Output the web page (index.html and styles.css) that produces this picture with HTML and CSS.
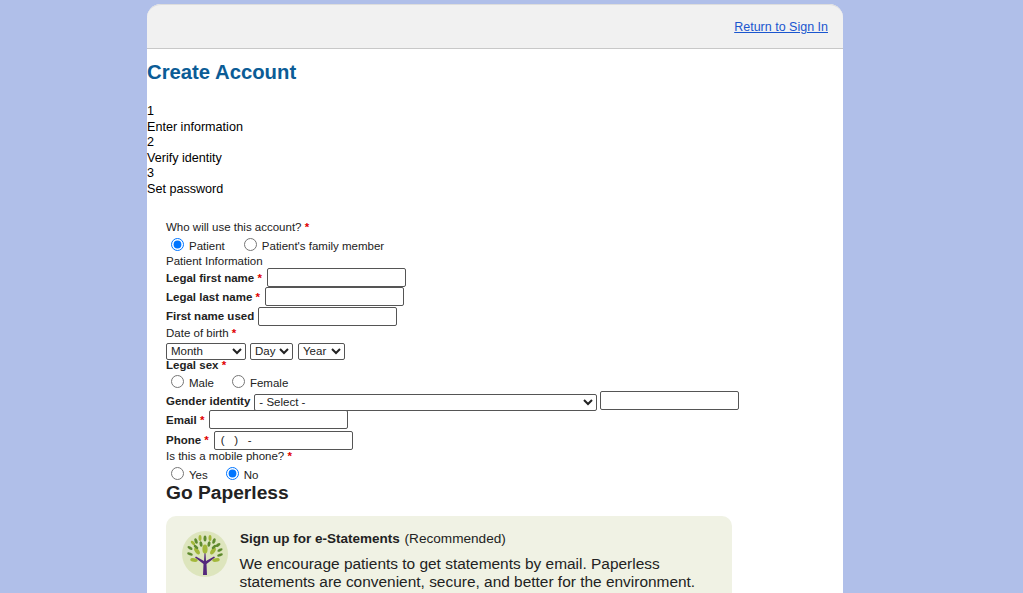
FILE: index.html
```html
<!DOCTYPE html>
<html>
<head>
<link rel="stylesheet" href="styles.css">
</head>
<body>

<div class="page">
  <div class="top-bar">
    <a class="return-link" href="#">Return to Sign In</a>
  </div>

  <h1 class="page-title">Create Account</h1>

  <div class="steps">
    <div>1</div>
    <div>Enter information</div>
    <div>2</div>
    <div>Verify identity</div>
    <div>3</div>
    <div>Set password</div>
  </div>

  <form class="account-form">
    <div class="plain-label">Who will use this account? <span class="req">*</span></div>
    <div class="radio-row who-row">
      <label class="radio-item patient-item"><input type="radio" name="who" checked> Patient</label>
      <label class="radio-item"><input type="radio" name="who"> Patient's family member</label>
    </div>
    <div class="plain-label">Patient Information</div>

    <div class="field-row"><label class="bold-label">Legal first name <span class="req">*</span></label><input class="text-input" type="text"></div>
    <div class="field-row"><label class="bold-label">Legal last name <span class="req">*</span></label><input class="text-input" type="text"></div>
    <div class="field-row"><label class="bold-label">First name used</label><input class="text-input" type="text"></div>

    <div class="plain-label">Date of birth <span class="req">*</span></div>
    <div class="dob-row">
      <select class="month-select"><option>Month</option></select>
      <select class="day-select"><option>Day</option></select>
      <select class="year-select"><option>Year</option></select>
    </div>

    <div class="bold-label sex-label">Legal sex <span class="req">*</span></div>
    <div class="radio-row sex-row">
      <label class="radio-item male-item"><input type="radio" name="sex"> Male</label>
      <label class="radio-item"><input type="radio" name="sex"> Female</label>
    </div>

    <div class="field-row">
      <label class="bold-label">Gender identity</label>
      <select class="gender-select"><option>- Select -</option></select>
      <input class="text-input" type="text">
    </div>
    <div class="field-row"><label class="bold-label">Email <span class="req">*</span></label><input class="text-input" type="text"></div>
    <div class="field-row phone-row"><label class="bold-label">Phone <span class="req">*</span></label><input class="text-input" type="text" value="(   )   -"></div>

    <div class="plain-label">Is this a mobile phone? <span class="req">*</span></div>
    <div class="radio-row mobile-row">
      <label class="radio-item yes-item"><input type="radio" name="mobile"> Yes</label>
      <label class="radio-item"><input type="radio" name="mobile" checked> No</label>
    </div>

    <h2 class="section-title">Go Paperless</h2>

    <div class="paperless-card">
      <svg class="tree-icon" viewBox="0 0 46 46" width="46" height="46">
        <circle cx="23" cy="23" r="23" fill="#dde5bd"/>
        <path d="M21 44 L21.5 33 L13 26.5 L14 25.5 L22 30 L22.5 22 L23.5 22 L24 30 L32 25.5 L33 26.5 L24.5 33 L25 44 Z" fill="#54287c"/>
        <g fill="#a3b83a">
          <ellipse cx="23" cy="18" rx="2.6" ry="4.5"/>
          <ellipse cx="15" cy="20" rx="2" ry="4" transform="rotate(-35 15 20)"/>
          <ellipse cx="31" cy="20" rx="2" ry="4" transform="rotate(35 31 20)"/>
          <ellipse cx="12" cy="29" rx="3.8" ry="1.8" transform="rotate(8 12 29)"/>
          <ellipse cx="34" cy="29" rx="3.8" ry="1.8" transform="rotate(-8 34 29)"/>
          <ellipse cx="18" cy="7" rx="1.5" ry="3"/>
          <ellipse cx="28" cy="7" rx="1.5" ry="3"/>
          <ellipse cx="11" cy="12" rx="1.5" ry="2.8" transform="rotate(-45 11 12)"/>
        </g>
        <g fill="#5f8a2e">
          <ellipse cx="23" cy="7.5" rx="1.5" ry="3"/>
          <ellipse cx="14" cy="10" rx="1.5" ry="2.8" transform="rotate(-20 14 10)"/>
          <ellipse cx="32" cy="10" rx="1.5" ry="2.8" transform="rotate(20 32 10)"/>
          <ellipse cx="36" cy="14" rx="2.8" ry="1.4" transform="rotate(-35 36 14)"/>
          <ellipse cx="8" cy="17" rx="2.8" ry="1.4" transform="rotate(30 8 17)"/>
          <ellipse cx="38" cy="19" rx="2.8" ry="1.4" transform="rotate(-25 38 19)"/>
          <ellipse cx="8" cy="23" rx="3" ry="1.4" transform="rotate(20 8 23)"/>
          <ellipse cx="38" cy="24" rx="3" ry="1.4" transform="rotate(-20 38 24)"/>
          <ellipse cx="19" cy="13" rx="1.5" ry="2.8" transform="rotate(-10 19 13)"/>
          <ellipse cx="27" cy="13" rx="1.5" ry="2.8" transform="rotate(10 27 13)"/>
          <ellipse cx="14" cy="16" rx="2.8" ry="1.4" transform="rotate(40 14 16)"/>
          <ellipse cx="32" cy="16" rx="2.8" ry="1.4" transform="rotate(-40 32 16)"/>
        </g>
      </svg>
      <div class="card-text">
        <div class="card-heading"><b>Sign up for e-Statements</b> (Recommended)</div>
        <div class="card-body">We encourage patients to get statements by email. Paperless statements are convenient, secure, and better for the environment.</div>
      </div>
    </div>
  </form>
</div>

</body>
</html>
```

FILE: styles.css
```css
html {
  overflow: hidden;
}

body {
  margin: 0;
  background-color: #b0bfe9;
  font-family: "Liberation Sans", Arial, sans-serif;
  color: #000;
}

.page {
  width: 696px;
  margin: 4px 0 0 147px;
  padding-bottom: 60px;
  background-color: #fff;
  border-radius: 14px 14px 0 0;
}

.top-bar {
  display: flex;
  justify-content: flex-end;
  height: 43px;
  padding-right: 15px;
  background-color: #f1f1f1;
  border-top: 1px solid #ddd;
  border-bottom: 1px solid #c8c8c8;
  border-radius: 14px 14px 0 0;
}

.return-link {
  height: 16px;
  margin-top: 14px;
  font-size: 12.5px;
  line-height: 16px;
  color: #1a56cf;
}

.page-title {
  margin: 11px 0 0;
  font-size: 20.3px;
  line-height: 24px;
  font-weight: bold;
  color: #0b5c96;
}

.steps {
  margin-top: 20px;
  font-size: 12.6px;
  line-height: 15.5px;
}

.account-form {
  margin-top: 23px;
  padding-left: 19px;
  font-size: 11.5px;
  color: #222;
}

.plain-label {
  line-height: 14px;
}

.req {
  margin-right: 1px;
  color: #e00000;
  font-weight: bold;
}

.radio-row {
  display: flex;
  height: 18px;
  padding-left: 5px;
  align-items: center;
}

.who-row {
  margin-top: 3px;
  margin-bottom: -1px;
}

.sex-row {
  margin-top: 2px;
  margin-bottom: -1px;
}

.mobile-row {
  margin-top: 3px;
  margin-bottom: -3px;
}

.radio-item {
  display: flex;
  align-items: center;
  gap: 5px;
}

.radio-item input {
  width: 13px;
  height: 13px;
  margin: 0 0 3px;
}

.patient-item {
  margin-right: 19px;
}

.male-item {
  margin-right: 18px;
}

.yes-item {
  margin-right: 18px;
}

.field-row {
  display: flex;
  align-items: center;
  gap: 4px;
  height: 19.3px;
}

.phone-row {
  margin-top: 1px;
  margin-bottom: -1px;
}

.bold-label {
  font-weight: bold;
}

.text-input {
  box-sizing: border-box;
  width: 139px;
  height: 19px;
  margin: 0;
  padding: 1px 6px;
  border: 1px solid #555;
  border-radius: 2px;
  background: #fff;
  font-family: inherit;
  font-size: 11.5px;
  color: #222;
}

.dob-row {
  display: flex;
  gap: 4px;
  margin-top: 3px;
}

.dob-row select,
.gender-select {
  box-sizing: border-box;
  height: 17px;
  padding: 0;
  border: 1px solid #555;
  border-radius: 2px;
  background-color: #fff;
  font-family: inherit;
  font-size: 11.5px;
  color: #222;
}

.dob-row select {
  margin: 0;
}

.month-select {
  width: 80px;
}

.day-select {
  width: 43px;
}

.dob-row .year-select {
  width: 47px;
  margin-left: 1px;
}

.sex-label {
  margin-top: -2px;
  line-height: 14px;
}

.gender-select {
  width: 343px;
  margin: 3px -1px 0 0;
}

.section-title {
  margin: 0;
  font-size: 19.2px;
  line-height: 24px;
  font-weight: bold;
  color: #222;
}

.paperless-card {
  display: flex;
  gap: 12px;
  width: 566px;
  margin-top: 11px;
  padding: 15px 16px 30px;
  box-sizing: border-box;
  background-color: #f0f2e4;
  border-radius: 10px;
}

.tree-icon {
  flex-shrink: 0;
}

.card-heading {
  font-size: 13.6px;
  line-height: 16px;
}

.card-heading b {
  margin-right: 1px;
  font-size: 13.5px;
}

.card-body {
  margin-top: 8px;
  margin-left: -0.5px;
  font-size: 15.45px;
  line-height: 18px;
}
```
